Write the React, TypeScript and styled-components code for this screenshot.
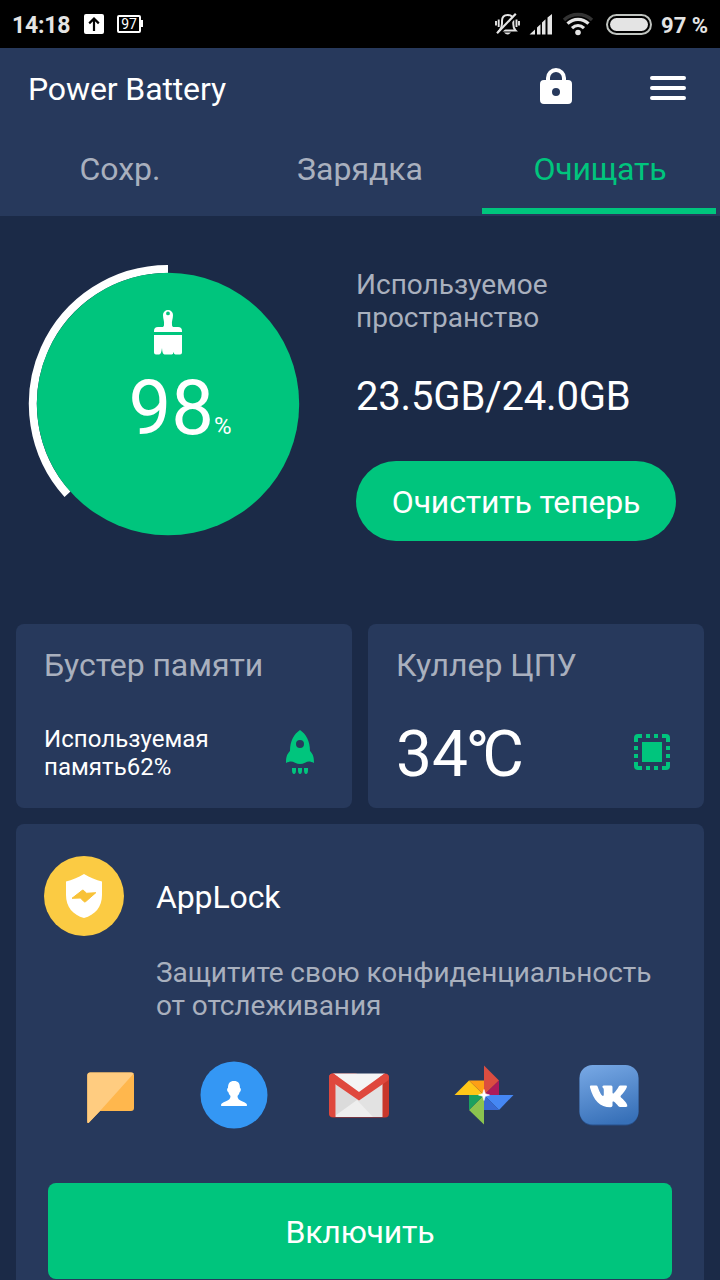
import React from "react";
import styled, { createGlobalStyle } from "styled-components";

const c = {
  bg: "#1b2a47",
  panel: "#27395c",
  green: "#00c57d",
  muted: "#a9b0be",
};

const Global = createGlobalStyle`
  * { box-sizing: border-box; }
  html, body { margin: 0; background: ${c.bg}; }
  body { font-family: Roboto, "Noto Sans", sans-serif; color: #fff; }
  svg { display: block; flex: none; }
`;

const Screen = styled.main`
  width: 720px;
  height: 1280px;
  overflow: hidden;
  background: ${c.bg};
`;

const Text = styled.div<{ $size: number; $line: number; $color?: string; $weight?: number; $track?: number; $top?: number; $left?: number }>`
  margin-left: ${(p) => p.$left ?? 0}px;
  padding-top: ${(p) => p.$top ?? 0}px;
  font-size: ${(p) => p.$size}px;
  line-height: ${(p) => p.$line}px;
  color: ${(p) => p.$color ?? "#fff"};
  font-weight: ${(p) => p.$weight ?? 400};
  letter-spacing: ${(p) => p.$track ?? 0}px;
  white-space: nowrap;
`;

const StatusBar = styled.div`
  height: 48px;
  padding: 2px 12px 0;
  background: #000;
  display: flex;
  align-items: center;
`;

const StatusGroup = styled.div`
  display: flex;
  align-items: center;
`;

const Spacer = styled.div`
  flex: 1;
`;

const StatusIcon = styled.svg<{ $left: number }>`
  margin-left: ${(p) => p.$left}px;
  margin-top: -2px;
`;

const Header = styled.header`
  height: 168px;
  background: ${c.panel};
`;

const TitleRow = styled.div`
  height: 80px;
  padding: 0 34px 0 28px;
  display: flex;
  align-items: center;
`;

const HeaderIcons = styled.div`
  margin-left: auto;
  display: flex;
  align-items: center;
  gap: 78px;
`;

const Tabs = styled.nav`
  height: 88px;
  display: grid;
  grid-template-columns: repeat(3, 1fr);
`;

const Tab = styled.div<{ $active?: boolean }>`
  display: flex;
  flex-direction: column;
  align-items: center;
  justify-content: space-between;
  padding: 21px 0 2px;
  font-size: 32px;
  line-height: 40px;
  letter-spacing: ${(p) => (p.$active ? -0.2 : 0)}px;
  color: ${(p) => (p.$active ? c.green : c.muted)};
`;

const Underline = styled.div`
  width: 234px;
  height: 6px;
  margin-right: 2px;
  background: ${c.green};
`;

const Overview = styled.section`
  height: 408px;
  display: flex;
  padding-left: 28px;
`;

const Gauge = styled.div`
  width: 280px;
  height: 280px;
  margin-top: 48px;
  display: grid;
  > * { grid-area: 1 / 1; }
`;

const GaugeContent = styled.div`
  padding-top: 46px;
  display: flex;
  flex-direction: column;
  align-items: center;
`;

const GaugeValue = styled.div`
  display: flex;
  align-items: baseline;
  margin: 6px 0 0 24px;
`;

const Usage = styled.div`
  margin-left: 48px;
  padding-top: 52px;
`;

const Amount = styled.div`
  padding: 36px 0 38px;
`;

const Button = styled.button`
  display: block;
  padding: 2px 0 0;
  border: 0;
  background: ${c.green};
  color: #fff;
  font: 32px/40px Roboto, sans-serif;
  letter-spacing: -0.18px;
`;

const PillButton = styled(Button)`
  width: 320px;
  height: 80px;
  border-radius: 40px;
`;

const CardGrid = styled.section`
  display: grid;
  grid-template-columns: 1fr 1fr;
  gap: 16px;
  padding: 0 16px;
`;

const Card = styled.article<{ $right: number }>`
  height: 184px;
  padding: 21px ${(p) => p.$right}px 0 28px;
  border-radius: 8px;
  background: ${c.panel};
`;

const CardBody = styled.div`
  display: flex;
  align-items: center;
  justify-content: space-between;
  height: 86px;
  margin-top: 24px;
`;

const Tight = styled.span<{ $by: number }>`
  letter-spacing: -${(p) => p.$by}px;
`;

const LockCard = styled.section`
  height: 470px;
  margin: 16px 16px 0;
  padding: 32px 32px 0;
  border-radius: 8px;
  background: ${c.panel};
`;

const LockTitle = styled.div`
  display: flex;
  align-items: center;
  gap: 32px;
  margin-left: -4px;
`;

const LockDescription = styled.div`
  margin: 20px 0 0 108px;
`;

const AppRow = styled.div`
  display: grid;
  grid-template-columns: repeat(5, 125px);
  justify-items: center;
  margin: 39px 0 0 -2px;
`;

const EnableButton = styled(Button)`
  width: 624px;
  height: 96px;
  margin-top: 54px;
  border-radius: 8px;
`;

const ink = "#e4e4e4";

const UploadIcon = () => (
  <StatusIcon $left={14} width="20" height="20" viewBox="0 0 20 20">
    <rect width="20" height="20" rx="2" fill="#fff" />
    <path d="M10 17V5M5.2 9.4 10 4.6l4.8 4.8" fill="none" stroke="#000" strokeWidth="2.2" />
  </StatusIcon>
);

const LevelIcon = () => (
  <StatusIcon $left={13} width="27" height="18" viewBox="0 0 27 18">
    <rect x="1" y="1" width="22" height="16" rx="1" fill="none" stroke="#fff" strokeWidth="2" />
    <rect x="24" y="5" width="2" height="7" fill="#fff" />
    <text x="12" y="14" textAnchor="middle" fontFamily="Roboto" fontSize="14" fill="#fff">97</text>
  </StatusIcon>
);

const MutedBell = () => (
  <StatusIcon $left={0} width="25" height="24" viewBox="0 0 25 24" fill="none" stroke={ink}>
    <path d="M4.500 18.500H20.500c-1.800-1.800-2.200-3.400-2.200-6.600V9c0-3.800-2.200-6-5.600-6S7 5.200 7 9v2.600c0 3-.5 4.800-2.500 6.900Z" strokeWidth="2" />
    <path d="M3.700 7.500v7.500M1 9v4.500M21.500 7.500v7.500M24 9v4.500" strokeWidth="1.900" />
    <path d="M9 20.500h7q-3.500 4-7 0Z" fill={ink} stroke="none" />
    <path d="M3.600 22.200 22.500 2.700" stroke="#000" strokeWidth="2.500" />
    <path d="M2 21.200 20.800 1.700" strokeWidth="2.200" />
  </StatusIcon>
);

const SignalIcon = () => (
  <StatusIcon $left={9} width="24" height="21" viewBox="0 0 24 21" fill={ink}>
    <path d="M.5 20.500 6 15.500v5ZM8 20.500v-7l3.500-3.300v10.300ZM13 20.500v-12l3.500-3.300v15.300ZM18.500 20.500V3.500L23 0v20.500Z" />
  </StatusIcon>
);

const WifiIcon = () => (
  <StatusIcon $left={9} width="32" height="24" viewBox="0 0 32 24" fill="none">
    <path d="M2 8C10 .8 22 .8 30 8" stroke="#333" strokeWidth="3.500" />
    <path d="M5.500 11.700c6-5.800 15-5.800 21 0M10 16.200c3.600-3.400 8.400-3.400 12 0" stroke={ink} strokeWidth="3.200" />
    <circle cx="16" cy="20.500" r="2.800" fill={ink} />
  </StatusIcon>
);

const CapsuleIcon = () => (
  <StatusIcon $left={12} width="46" height="21" viewBox="0 0 46 21">
    <rect x="1" y="1" width="44" height="19" rx="9.500" fill="none" stroke="#bfc3bf" strokeWidth="2" />
    <rect x="4" y="4" width="38" height="13" rx="6.500" fill={ink} />
  </StatusIcon>
);

const LockIcon = () => (
  <svg width="32" height="40" viewBox="0 0 32 40">
    <path d="M8 14V10a8 8 0 0 1 16 0v4" fill="none" stroke="#fff" strokeWidth="4" />
    <path fillRule="evenodd" fill="#fff" d="M4 12h24a4 4 0 0 1 4 4v16a4 4 0 0 1-4 4H4a4 4 0 0 1-4-4V16a4 4 0 0 1 4-4Zm12 8a4 4 0 1 0 0 8 4 4 0 0 0 0-8Z" />
  </svg>
);

const MenuIcon = () => (
  <svg width="36" height="24" viewBox="0 0 36 24" stroke="#fff" strokeWidth="4" strokeLinecap="round">
    <path d="M2 2h32M2 12h32M2 22h32" />
  </svg>
);

const GaugeRing = () => (
  <svg width="280" height="280" viewBox="0 0 280 280">
    <path d="M140 5A135 135 0 0 0 39.500 230.300" fill="none" stroke="#fff" strokeWidth="8" />
    <circle cx="140" cy="140" r="131.200" fill={c.green} />
  </svg>
);

const BrushIcon = () => (
  <svg width="28" height="45" viewBox="0 0 28 45" fill="#fff">
    <path fillRule="evenodd" d="M14 0a5 5 0 0 1 5 5c0 4-1.500 6-1 10 .1 1.400.8 2 2 2h4a4 4 0 0 1 4 4v1H0v-1a4 4 0 0 1 4-4h4c1.200 0 1.900-.6 2-2 .5-4-1-6-1-10a5 5 0 0 1 5-5Zm0 1.500a1.900 1.900 0 1 0 0 3.800 1.900 1.900 0 0 0 0-3.800Z" />
    <path d="M0 25h28v17.500q0 2-2 2h-4.500q-1.500 0-1.900-2.500-.4 2.500-1.900 2.500h-7.200q-2.200 0-2.500-6.500-.8 6.500-2.800 6.500H2q-2 0-2-2Z" />
  </svg>
);

const RocketIcon = () => (
  <svg width="28" height="44" viewBox="0 0 28 44" fill={c.green}>
    <path fillRule="evenodd" d="M14 0c6 4 10 11 10 21 2.700 3 4 5 4 12-4-2-6-2-9-.2-3.500 1.600-6.500 1.600-10 0C6 31 4 31 0 33c0-7 1.300-9 4-12C4 11 8 4 14 0Zm0 10a4 4 0 1 0 0 8 4 4 0 0 0 0-8Z" />
    <path d="M6 38h4v2q0 4-2 4t-2-4ZM12 38h4v2q0 4-2 4t-2-4ZM18 38h4v2q0 4-2 4t-2-4Z" />
  </svg>
);

const ChipIcon = () => (
  <svg width="36" height="36" viewBox="0 0 36 36" fill={c.green}>
    <path d="M8 8h20v20H8ZM0 8V4a4 4 0 0 1 4-4h4v4H4v4ZM28 0h4a4 4 0 0 1 4 4v4h-4V4h-4ZM0 28h4v4h4v4H4a4 4 0 0 1-4-4ZM32 28h4v4a4 4 0 0 1-4 4h-4v-4h4ZM12 0h4v4h-4ZM20 0h4v4h-4ZM12 32h4v4h-4ZM20 32h4v4h-4ZM0 12h4v4H0ZM0 20h4v4H0ZM32 12h4v4h-4ZM32 20h4v4h-4Z" />
  </svg>
);

const ShieldBadge = () => (
  <svg width="80" height="80" viewBox="0 0 80 80">
    <circle cx="40" cy="40" r="40" fill="#fbcb43" />
    <path d="M40 18c6 3.500 12 6 18 7.500V39c0 12-7 20-18 23-11-3-18-11-18-23V25.500C28 24 34 21.500 40 18Z" fill="#fff" />
    <path d="m28 42.300 10.300-8q.8-.5 1.500.3l2.700 2.700 9.300-.6-10 8.800q-1 .9-1.900.1L36.500 42Z" fill="#f8c238" stroke="#f8c238" strokeWidth="1" strokeLinejoin="round" />
  </svg>
);

const ChatIcon = () => (
  <svg width="68" height="68" viewBox="2 0 68 68">
    <path d="M17 11.500h41q3 0 3 3v32.500q0 3-3 3H27L16 61.500q-1.700 1.500-1.700-1V14.500q0-3 2.700-3Z" fill="#ffb74d" />
    <path d="M17.300 11.500H58q2 0 2.700 1L27 50 16 61.500q-1.700 1.500-1.700-1V14.500q0-3 3-3Z" fill="#ffcc80" />
  </svg>
);

const ContactIcon = () => (
  <svg width="68" height="68" viewBox="0 0 68 68">
    <circle cx="34" cy="34" r="33.500" fill="#3497f4" />
    <path d="M34 20c4.300 0 6 2.500 6 7 1.200.2 1.200 3.300-.3 4-.4 2-1.500 3.200-2.200 4 0 2.800 1.500 4 4.500 5.200 3.700 1.400 5 2.300 5 4 0 .6-.4.900-1 .9H22c-.6 0-1-.3-1-.9 0-1.700 1.300-2.600 5-4 3-1.200 4.500-2.400 4.500-5.200-.7-.8-1.800-2-2.200-4-1.500-.7-1.500-3.800-.3-4C28 22.500 29.700 20 34 20Z" fill="#fff" />
  </svg>
);

const MailIcon = () => (
  <svg width="68" height="68" viewBox="0 0 68 68">
    <rect x="4" y="13" width="60" height="43.500" rx="4" fill="#c8372b" />
    <rect x="4" y="12.500" width="30" height="43.500" rx="4" fill="#df483d" />
    <path d="M10.500 16h47v40h-47Z" fill="#e2e2e2" />
    <path d="m11 54 21-15 16 17H11Z" fill="#eee" />
    <path d="m11 22 22 16-22 16Z" fill="#dbdbdb" />
    <path d="M8 12.500h52L34 31Z" fill="#f4f4f4" />
    <path d="M4 16.500Q4 12.500 8.500 12.500L34 31l25.500-18.500q4.500 0 4.500 4 0 2.300-2 3.800L34 39.500 6 20.300q-2-1.500-2-3.800Z" fill="#df483d" />
  </svg>
);

const PhotosIcon = () => (
  <svg width="68" height="68" viewBox="0 0 68 68">
    <path d="M34 4.500 49 19.500 34 34Z" fill="#db4d40" />
    <path d="M49 19.500V34H34Z" fill="#ad1a5b" />
    <path d="M34 34h29.500L49 49Z" fill="#4587f4" />
    <path d="M34 34 49 49H34Z" fill="#3769d4" />
    <path d="M34 34v29.500L19 49Z" fill="#8bc34f" />
    <path d="M34 34 19 49V34Z" fill="#1ba15f" />
    <path d="M34 34H4.500L19 19.500Z" fill="#ffc718" />
    <path d="M34 34 19 19.500h15Z" fill="#fd9f16" />
    <path d="M34 28.500 35.300 32.700 39.500 34 35.300 35.300 34 39.500 32.700 35.300 28.500 34 32.700 32.700Z" fill="#fff" stroke="#fff" strokeWidth=".6" />
  </svg>
);

const VkIcon = () => (
  <svg width="68" height="68" viewBox="0 0 68 68">
    <defs>
      <linearGradient id="vk" x1=".3" y1="0" x2=".6" y2="1">
        <stop stopColor="#74a5e2" />
        <stop offset="1" stopColor="#3770b8" />
      </linearGradient>
    </defs>
    <rect x="4.500" y="5" width="59" height="59.500" rx="13" fill="#28508a" />
    <rect x="4.500" y="4" width="59" height="59.500" rx="13" fill="url(#vk)" />
    <path d="M15.700 24.500h5.600q1 0 1.400 1.200c1.700 5.200 3.600 8.700 5.100 9.200.8.100 1-.4 1-1.700v-4.200c0-1.700-.6-2.300-1.400-2.800q-.4-1.700 1.300-1.700h7.500q1.300 0 1.300 1.500v5.600c0 1.200.8 1.300 1.500.5 2-2 3.600-4.400 4.700-6.600q.6-1 1.700-1h5.300q1.700 0 1.200 1.400c-1 3-3.800 6.300-6 8.700q-.9 1 .1 2c2.300 2 5.200 4.600 6.200 7.400q.7 2.100-1.300 2.100h-5.700q-1.200 0-2-1c-1.200-1.500-2.600-3.300-4.400-4.500-.9-.5-1.300 0-1.300 1.200v2.600q0 1.800-2.100 1.800C25 46.200 18.500 39.500 15 26.500q-.5-2 .7-2Z" fill="#fff" />
  </svg>
);

export default function App() {
  return (
    <>
      <Global />
      <Screen>
        <StatusBar>
          <StatusGroup>
            <Text $size={23} $line={44} $top={2} $weight={700} $color={ink} $track={-0.2}>14:18</Text>
            <UploadIcon />
            <LevelIcon />
          </StatusGroup>
          <Spacer />
          <StatusGroup>
            <MutedBell />
            <SignalIcon />
            <WifiIcon />
            <CapsuleIcon />
            <Text $size={22} $line={44} $top={1} $left={9} $weight={700} $color={ink}>97 %</Text>
          </StatusGroup>
        </StatusBar>
        <Header>
          <TitleRow>
            <Text $size={32} $line={80} $top={2} $track={-0.12}>Power Battery</Text>
            <HeaderIcons>
              <LockIcon />
              <MenuIcon />
            </HeaderIcons>
          </TitleRow>
          <Tabs>
            <Tab>Сохр.</Tab>
            <Tab>Зарядка</Tab>
            <Tab $active>
              Очищать
              <Underline />
            </Tab>
          </Tabs>
        </Header>
        <Overview>
          <Gauge>
            <GaugeRing />
            <GaugeContent>
              <BrushIcon />
              <GaugeValue>
                <Text $size={76} $line={94}>98</Text>
                <Text $size={24} $line={30}>%</Text>
              </GaugeValue>
            </GaugeContent>
          </Gauge>
          <Usage>
            <Text $size={28} $line={33} $color={c.muted}>Используемое<br />пространство</Text>
            <Amount>
              <Text $size={40} $line={53} $track={-0.17}>23.5GB/24.0GB</Text>
            </Amount>
            <PillButton>Очистить теперь</PillButton>
          </Usage>
        </Overview>
        <CardGrid>
          <Card $right={38}>
            <Text $size={32} $line={40} $color={c.muted} $track={-0.06}>Бустер памяти</Text>
            <CardBody>
              <Text $size={24} $line={28} $top={2} $track={0.05}>Используемая<br />память62%</Text>
              <RocketIcon />
            </CardBody>
          </Card>
          <Card $right={34}>
            <Text $size={32} $line={40} $color={c.muted}>Куллер ЦПУ</Text>
            <CardBody>
              <Text $size={64} $line={82} $top={6}>3<Tight $by={2.5}>4</Tight><Tight $by={7}>°</Tight>C</Text>
              <ChipIcon />
            </CardBody>
          </Card>
        </CardGrid>
        <LockCard>
          <LockTitle>
            <ShieldBadge />
            <Text $size={32} $line={78} $top={2} $track={-0.12}>AppLock</Text>
          </LockTitle>
          <LockDescription>
            <Text $size={28} $line={33} $color={c.muted} $track={-0.07}>Защитите свою конфиденциальность<br />от отслеживания</Text>
          </LockDescription>
          <AppRow>
            <ChatIcon />
            <ContactIcon />
            <MailIcon />
            <PhotosIcon />
            <VkIcon />
          </AppRow>
          <EnableButton>Включить</EnableButton>
        </LockCard>
      </Screen>
    </>
  );
}
